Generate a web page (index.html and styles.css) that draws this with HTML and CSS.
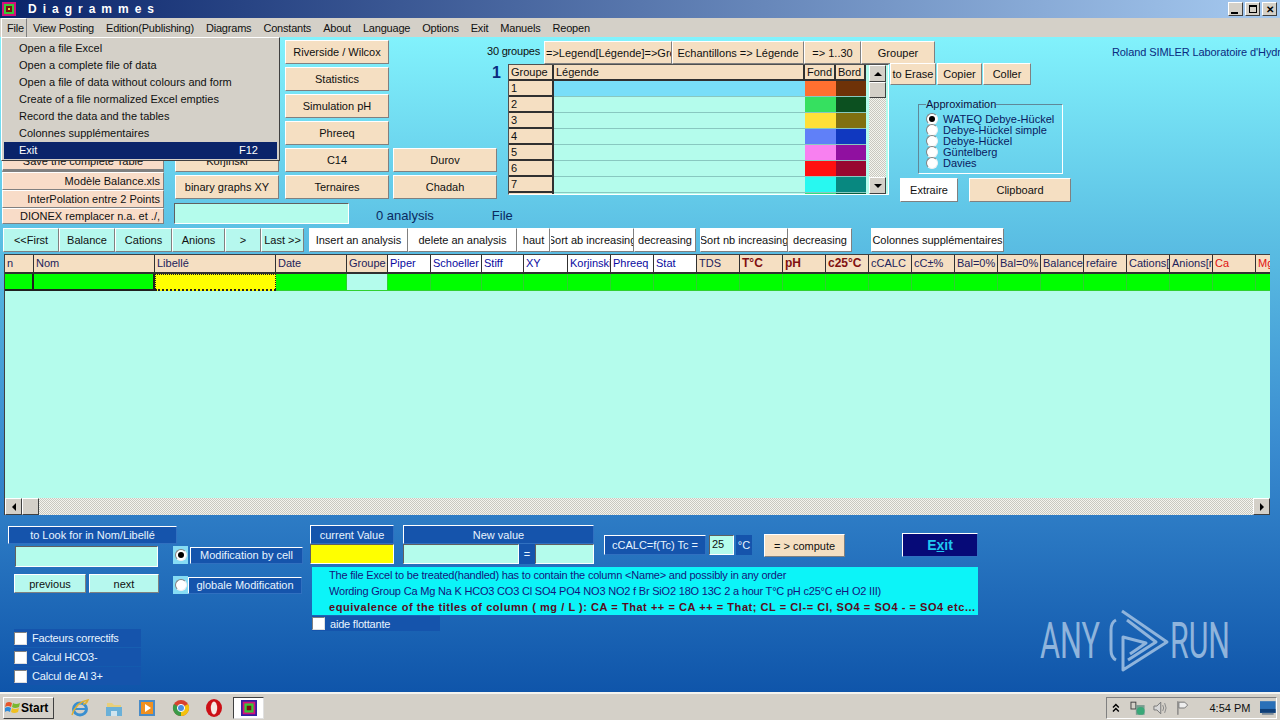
FILE: index.html
```html
<!DOCTYPE html>
<html lang="en">

<head>
    <meta charset="UTF-8">
    <meta name="viewport" content="width=device-width, initial-scale=1.0">
    <title>Diagrammes</title>
    <link rel="stylesheet" href="styles.css">
</head>

<body>
    <div class="titlebar">
        <svg class="app-icon" viewBox="0 0 14 14" width="14" height="14">
            <rect width="14" height="14" fill="#d4107c" />
            <rect x="2" y="2" width="10" height="10" fill="#38c838" />
            <rect x="4" y="4" width="6" height="6" fill="#7a1010" />
            <rect x="6" y="6" width="2" height="2" fill="#e0e040" />
        </svg>
        <span class="title-text">Diagrammes</span>
        <div class="win-buttons">
            <span class="win-btn"><i class="ico-min"></i></span>
            <span class="win-btn"><i class="ico-restore"></i></span>
            <span class="win-btn win-close">✕</span>
        </div>
    </div>

    <div class="menubar">
        <span class="menu-item menu-open">File</span>
        <span class="menu-item">View Posting</span>
        <span class="menu-item">Edition(Publishing)</span>
        <span class="menu-item">Diagrams</span>
        <span class="menu-item">Constants</span>
        <span class="menu-item">About</span>
        <span class="menu-item">Language</span>
        <span class="menu-item">Options</span>
        <span class="menu-item">Exit</span>
        <span class="menu-item">Manuels</span>
        <span class="menu-item">Reopen</span>
    </div>

    <div class="dropdown">
        <div class="drop-item">Open a file Excel</div>
        <div class="drop-item">Open a complete file of data</div>
        <div class="drop-item">Open a file of data without colours and form</div>
        <div class="drop-item">Create of a file normalized Excel empties</div>
        <div class="drop-item">Record the data and the tables</div>
        <div class="drop-item">Colonnes supplémentaires</div>
        <div class="drop-item drop-selected"><span>Exit</span><span>F12</span></div>
    </div>

    <div class="form">
        <div class="top">
            <div class="col-files">
                <div class="btn btn-pink btn-save">Save the complete Table</div>
                <div class="btn btn-pink btn-right h18">Modèle Balance.xls</div>
                <div class="btn btn-pink btn-right h18">InterPolation entre 2 Points</div>
                <div class="btn btn-pink btn-right h16">DIONEX remplacer n.a. et ./,</div>
            </div>

            <div class="col-graphs">
                <div class="btn btn-beige h23">Korjinski</div>
                <div class="btn btn-beige h24">binary graphs XY</div>
                <div class="field field-search"></div>
            </div>

            <div class="col-diagrams">
                <div class="btn btn-beige">Riverside / Wilcox</div>
                <div></div>
                <div class="btn btn-beige">Statistics</div>
                <div></div>
                <div class="btn btn-beige">Simulation pH</div>
                <div></div>
                <div class="btn btn-beige">Phreeq</div>
                <div></div>
                <div class="btn btn-beige">C14</div>
                <div class="btn btn-beige">Durov</div>
                <div class="btn btn-beige">Ternaires</div>
                <div class="btn btn-beige">Chadah</div>
                <div class="status-row">
                    <span class="status-analysis">0 analysis</span>
                    <span class="status-file">File</span>
                </div>
            </div>

            <div class="col-groups">
                <div class="groups-head">
                    <span class="groups-count">30 groupes</span>
                    <div class="btn btn-beige w128 nowrap-clip">=&gt;Legend[Légende]=&gt;Groupe</div>
                    <div class="btn btn-beige w132">Echantillons =&gt; Légende</div>
                    <div class="btn btn-beige w57">=&gt; 1..30</div>
                    <div class="btn btn-beige w74">Grouper</div>
                </div>
                <div class="groups-body">
                    <span class="group-number">1</span>
                    <div class="legend">
                        <div class="legend-row legend-head">
                            <span>Groupe</span><span>Légende</span><span>Fond</span><span>Bord</span>
                        </div>
                        <div class="legend-row">
                            <span class="fixed">1</span><span class="legend-cur"></span><span class="c-a1"></span><span class="c-a2"></span>
                        </div>
                        <div class="legend-row">
                            <span class="fixed">2</span><span></span><span class="c-b1"></span><span class="c-b2"></span>
                        </div>
                        <div class="legend-row">
                            <span class="fixed">3</span><span></span><span class="c-c1"></span><span class="c-c2"></span>
                        </div>
                        <div class="legend-row">
                            <span class="fixed">4</span><span></span><span class="c-d1"></span><span class="c-d2"></span>
                        </div>
                        <div class="legend-row">
                            <span class="fixed">5</span><span></span><span class="c-e1"></span><span class="c-e2"></span>
                        </div>
                        <div class="legend-row">
                            <span class="fixed">6</span><span></span><span class="c-f1"></span><span class="c-f2"></span>
                        </div>
                        <div class="legend-row">
                            <span class="fixed">7</span><span></span><span class="c-g1"></span><span class="c-g2"></span>
                        </div>
                        <div class="legend-row legend-cut">
                            <span class="fixed"></span><span></span><span class="c-h1"></span><span class="c-h2"></span>
                        </div>
                        <div class="legend-scroll">
                            <span class="sb-btn"><i class="arrow-up"></i></span>
                            <span class="sb-thumb"></span>
                            <span class="sb-track"></span>
                            <span class="sb-btn"><i class="arrow-down"></i></span>
                        </div>
                    </div>
                    <div class="groups-side">
                        <div class="side-buttons">
                            <div class="btn btn-beige w46">to Erase</div>
                            <div class="btn btn-beige w45">Copier</div>
                            <div class="btn btn-beige w48">Coller</div>
                        </div>
                        <fieldset class="approx">
                            <legend>Approximation</legend>
                            <div class="approx-row"><span class="radio radio-on"></span>WATEQ Debye-Hückel</div>
                            <div class="approx-row"><span class="radio"></span>Debye-Hückel simple</div>
                            <div class="approx-row"><span class="radio"></span>Debye-Hückel</div>
                            <div class="approx-row"><span class="radio"></span>Güntelberg</div>
                            <div class="approx-row"><span class="radio"></span>Davies</div>
                        </fieldset>
                        <div class="side-actions">
                            <div class="btn btn-white w58">Extraire</div>
                            <div class="btn btn-beige w102">Clipboard</div>
                        </div>
                    </div>
                </div>
            </div>

            <div class="author">Roland SIMLER Laboratoire d'Hydrogéologie</div>
        </div>

        <div class="toolbar">
            <div class="btn btn-mint w56">&lt;&lt;First</div>
            <div class="btn btn-mint w56">Balance</div>
            <div class="btn btn-mint w57">Cations</div>
            <div class="btn btn-mint w53">Anions</div>
            <div class="btn btn-mint w36">&gt;</div>
            <div class="btn btn-mint w43">Last &gt;&gt;</div>
            <div class="btn btn-white w99 ml5">Insert an analysis</div>
            <div class="btn btn-white w109">delete an analysis</div>
            <div class="btn btn-white w33">haut</div>
            <div class="btn btn-white w84">Sort ab increasing</div>
            <div class="btn btn-white w62">decreasing</div>
            <div class="btn btn-white w88 ml4">Sort nb increasing</div>
            <div class="btn btn-white w64">decreasing</div>
            <div class="btn btn-white w133 ml19">Colonnes supplémentaires</div>
        </div>

        <div class="sheet">
            <div class="sheet-rows">
                <div class="sheet-row sheet-head">
                    <span class="hd">n</span>
                    <span class="hd">Nom</span>
                    <span class="hd">Libellé</span>
                    <span class="hd">Date</span>
                    <span class="hd">Groupe</span>
                    <span class="hd-w">Piper</span>
                    <span class="hd-w">Schoeller</span>
                    <span class="hd-w">Stiff</span>
                    <span class="hd-w">XY</span>
                    <span class="hd-w">Korjinski</span>
                    <span class="hd-w">Phreeq</span>
                    <span class="hd-w">Stat</span>
                    <span class="hd">TDS</span>
                    <span class="hd hd-red">T°C</span>
                    <span class="hd hd-red">pH</span>
                    <span class="hd hd-red">c25°C</span>
                    <span class="hd">cCALC</span>
                    <span class="hd">cC±%</span>
                    <span class="hd">Bal=0%</span>
                    <span class="hd">Bal=0%</span>
                    <span class="hd">Balance</span>
                    <span class="hd">refaire</span>
                    <span class="hd">Cations[meq]</span>
                    <span class="hd">Anions[meq]</span>
                    <span class="hd hd-ion">Ca</span>
                    <span class="hd hd-ion">Mg</span>
                </div>
                <div class="sheet-row sheet-data">
                    <span class="cell-fix"></span>
                    <span class="cell-fix"></span>
                    <span class="cell-cur"></span>
                    <span></span>
                    <span class="cell-mint"></span>
                    <span></span><span></span><span></span><span></span><span></span><span></span><span></span>
                    <span></span><span></span><span></span><span></span><span></span><span></span><span></span>
                    <span></span><span></span><span></span><span></span><span></span><span></span><span></span>
                </div>
            </div>
            <div class="sheet-scroll">
                <span class="sb-btn"><i class="arrow-left"></i></span>
                <span class="sb-btn"></span>
                <span class="sb-track"></span>
                <span class="sb-btn"><i class="arrow-right"></i></span>
            </div>
        </div>

        <div class="bottom">
            <div class="col-search">
                <div class="label label-look">to Look for in Nom/Libellé</div>
                <div class="field field-look"></div>
                <div class="nav-buttons">
                    <div class="btn btn-mint w72">previous</div>
                    <div class="btn btn-mint w70">next</div>
                </div>
                <div class="options">
                    <div class="option"><span class="check"></span>Facteurs correctifs</div>
                    <div class="option"><span class="check"></span>Calcul HCO3-</div>
                    <div class="option"><span class="check"></span>Calcul de Al 3+</div>
                </div>
            </div>

            <div class="col-mode">
                <div class="mode-row">
                    <span class="radio-box"><span class="radio radio-on"></span></span>
                    <span class="label label-mode">Modification by cell</span>
                </div>
                <div class="mode-row mode-global">
                    <span class="radio-box"><span class="radio"></span></span>
                    <span class="label label-global">globale Modification</span>
                </div>
            </div>

            <div class="col-edit">
                <div class="edit-row">
                    <div class="value-box w84">
                        <div class="label label-value">current Value</div>
                        <div class="field field-yellow"></div>
                    </div>
                    <div class="value-box w191">
                        <div class="label label-value">New value</div>
                        <div class="value-fields">
                            <div class="field field-new"></div>
                            <div class="equals">=</div>
                            <div class="field field-new2"></div>
                        </div>
                    </div>
                    <div class="calc">
                        <span class="label label-calc">cCALC=f(Tc) Tc =</span>
                        <span class="field field-tc">25</span>
                        <span class="label label-deg">°C</span>
                    </div>
                    <div class="btn btn-beige btn-compute">= &gt; compute</div>
                    <div class="btn-exit">E<u>x</u>it</div>
                </div>
                <div class="info">
                    <div>The file Excel to be treated(handled) has to contain the column &lt;Name&gt; and possibly in any order</div>
                    <div>Wording Group Ca Mg Na K HCO3 CO3 Cl SO4 PO4 NO3 NO2 f Br SiO2 18O 13C 2 a hour T°C pH c25°C eH O2 III)</div>
                    <div class="info-bold">equivalence of the titles of column ( mg / L ): CA = That ++ = CA ++ = That; CL = Cl-= Cl, SO4 = SO4 - = SO4 etc...</div>
                </div>
                <div class="option option-help"><span class="check"></span>aide flottante</div>
            </div>
        </div>

        <svg class="watermark" viewBox="0 0 200 70" width="200" height="70">
            <text x="2" y="53" textLength="60" lengthAdjust="spacingAndGlyphs">ANY</text>
            <g fill="none" stroke-width="3" stroke-linejoin="round">
                <path d="M78 15 C74 17 73 20 73 25 V45 C73 50 74 53 78 55" />
                <path d="M84 6 L129 37 L85 65 V32 L108 38 L92 49" />
                <path d="M89 15 L118 37 L90 55" />
            </g>
            <text x="132" y="53" textLength="60" lengthAdjust="spacingAndGlyphs">RUN</text>
        </svg>
    </div>

    <div class="taskbar">
        <div class="start">
            <svg viewBox="0 0 16 16" width="16" height="16">
                <path d="M1 3 Q4 1 7 3 L6 7 Q3 5 0 7 Z" fill="#e8562a" />
                <path d="M8 3 Q11 5 15 3 L14 7 Q10 9 7 7 Z" fill="#7ab82e" />
                <path d="M0 8 Q3 6 6 8 L5 12 Q2 10 0 12 Z" fill="#2d8ad8" />
                <path d="M7 8 Q10 10 14 8 L13 12 Q9 14 6 12 Z" fill="#f0c020" />
            </svg>
            <span>Start</span>
        </div>
        <div class="task-icons">
            <svg viewBox="0 0 20 20" width="20" height="20">
                <ellipse cx="10" cy="11" rx="6.5" ry="6" fill="none" stroke="#3a8fd0" stroke-width="3" />
                <path d="M4 11 H16" stroke="#3a8fd0" stroke-width="2" />
                <path d="M2 17 C5 7 12 3 18 2 C17 5 15 6 13 6" fill="none" stroke="#e0b030" stroke-width="1.5" />
            </svg>
            <svg viewBox="0 0 20 20" width="20" height="20">
                <path d="M3 5 H8 L10 7 H17 V10 H3 Z" fill="#e8cf7a" />
                <path d="M2 9 H18 V18 H13 V13 H7 V18 H2 Z" fill="#6ab0d8" />
                <rect x="7" y="13" width="6" height="5" fill="#d0e4ee" />
            </svg>
            <svg viewBox="0 0 20 20" width="20" height="20">
                <rect x="2" y="2" width="16" height="16" fill="#4a8cc8" />
                <rect x="4" y="4" width="12" height="12" fill="#f09020" />
                <path d="M8 6 L14 10 L8 14 Z" fill="#fff" />
            </svg>
            <svg viewBox="0 0 20 20" width="20" height="20">
                <circle cx="10" cy="10" r="8" fill="#d8412f" />
                <path d="M10 10 L17 6 A8 8 0 0 1 10 18 Z" fill="#f4c20d" />
                <path d="M10 10 L10 18 A8 8 0 0 1 3 6 Z" fill="#3a9a48" />
                <circle cx="10" cy="10" r="3.6" fill="#4a8ee0" stroke="#fff" />
            </svg>
            <svg viewBox="0 0 20 20" width="20" height="20">
                <ellipse cx="10" cy="10" rx="8" ry="9" fill="#cc0f16" />
                <ellipse cx="10" cy="10" rx="3.2" ry="6.5" fill="#f6e8e4" />
            </svg>
        </div>
        <div class="task-active">
            <svg viewBox="0 0 14 14" width="16" height="16">
                <rect width="14" height="14" fill="#3020a0" />
                <rect x="1.5" y="1.5" width="11" height="11" fill="#d4107c" />
                <rect x="3" y="3" width="8" height="8" fill="#38c838" />
                <rect x="5" y="5" width="4" height="4" fill="#7a1010" />
            </svg>
        </div>
        <div class="tray">
            <svg class="tray-chevron" viewBox="0 0 8 10" width="8" height="10">
                <path d="M1 4.5 L4 1.5 L7 4.5 M1 8.5 L4 5.5 L7 8.5" fill="none" stroke="#000" stroke-width="1.5" />
            </svg>
            <svg viewBox="0 0 16 16" width="16" height="16">
                <rect x="1" y="2" width="5" height="7" fill="none" stroke="#444" />
                <rect x="6" y="5" width="9" height="10" fill="#7a9c90" />
                <circle cx="11" cy="11" r="4" fill="#3aa878" />
            </svg>
            <svg viewBox="0 0 16 16" width="16" height="16">
                <path d="M2 6 H5 L9 2 V14 L5 10 H2 Z" fill="#d8d8d8" stroke="#777" />
                <path d="M11 5 Q13 8 11 11 M13 3 Q16 8 13 13" fill="none" stroke="#888" />
            </svg>
            <svg viewBox="0 0 16 16" width="16" height="16">
                <path d="M3 1 V15" stroke="#666" />
                <path d="M4 2 H10 L13 5 L10 8 H4 Z" fill="#eee" stroke="#777" />
            </svg>
            <span class="clock">4:54 PM</span>
            <svg class="show-desktop" viewBox="0 0 16 14" width="16" height="14">
                <rect width="16" height="12" fill="#2a70b8" />
                <rect y="8" width="16" height="4" fill="#0f3f78" />
                <rect x="2" y="12" width="12" height="2" fill="#7a8a98" />
            </svg>
        </div>
    </div>
</body>

</html>
```

FILE: styles.css
```css
* {
    box-sizing: border-box;
}

html,
body {
    margin: 0;
    padding: 0;
    height: 100%;
    overflow: hidden;
}

body {
    position: relative;
    display: flex;
    flex-direction: column;
    width: 1280px;
    height: 720px;
    font-family: "Liberation Sans", Arial, sans-serif;
    font-size: 11px;
    color: #101010;
    background-color: #d4d0c8;
}

/* title and menu */
.titlebar {
    display: flex;
    align-items: center;
    height: 18px;
    padding: 0 3px 0 2px;
    background: linear-gradient(to right, #0a246a, #a6caf0);
}

.title-text {
    margin-left: 12px;
    color: #fff;
    font-weight: bold;
    font-size: 12px;
    letter-spacing: 6px;
}

.win-buttons {
    display: flex;
    gap: 2px;
    margin-left: auto;
}

.win-btn {
    display: flex;
    align-items: center;
    justify-content: center;
    width: 15px;
    height: 14px;
    font-size: 10px;
    font-weight: bold;
    color: #000;
    background-color: #d4d0c8;
    border: 1px solid;
    border-color: #fff #404040 #404040 #fff;
}

.ico-min {
    width: 7px;
    height: 2px;
    margin-top: 7px;
    margin-right: 2px;
    background-color: #000;
}

.ico-restore {
    width: 8px;
    height: 8px;
    border: 1px solid #000;
    border-top-width: 2px;
}

.menubar {
    display: flex;
    align-items: center;
    height: 19px;
    padding-left: 1px;
    letter-spacing: -0.2px;
    background-color: #d4d0c8;
}

.menu-item {
    padding: 0 6px;
    line-height: 18px;
}

.menu-open {
    width: 26px;
    padding: 0 5px;
    border: 1px solid;
    border-color: #fff #808080 #808080 #fff;
}

.dropdown {
    position: absolute;
    z-index: 5;
    top: 37px;
    left: 1px;
    width: 279px;
    height: 124px;
    padding: 2px;
    background-color: #d4d0c8;
    border: 1px solid;
    border-color: #fff #404040 #404040 #fff;
}

.drop-item {
    height: 17px;
    padding-left: 15px;
    line-height: 17px;
}

.drop-selected {
    display: flex;
    justify-content: space-between;
    padding-right: 19px;
    color: #fff;
    background-color: #0a246a;
}

/* main form */
.form {
    position: relative;
    display: flex;
    flex-direction: column;
    height: 655px;
    overflow: hidden;
    background: linear-gradient(to bottom, #82f2fc 0%, #5cc0e4 30%, #3a8cd0 62%, #0f55aa 100%);
}

.top {
    display: flex;
    height: 191px;
    padding: 3px 0 0 2px;
    color: #0a2a60;
}

.btn {
    display: flex;
    align-items: center;
    justify-content: center;
    height: 100%;
    white-space: nowrap;
    overflow: hidden;
    color: #101010;
    border: 1px solid;
    border-color: #fff #808080 #808080 #fff;
}

.btn-beige {
    background-color: #f5dfc2;
}

.btn-pink {
    background-color: #f8dcc8;
}

.btn-mint {
    background-color: #b6f8ee;
}

.btn-white {
    background-color: #fff;
}

.btn-right {
    justify-content: flex-end;
    padding-right: 3px;
}

.nowrap-clip {
    justify-content: flex-start;
    padding-left: 1px;
}

.h16 {
    height: 16px;
}

.h18 {
    height: 18px;
}

.h23 {
    height: 23px;
}

.h24 {
    height: 24px;
}

.w33 { width: 33px; }
.w36 { width: 36px; }
.w43 { width: 43px; }
.w45 { width: 45px; }
.w46 { width: 46px; }
.w48 { width: 48px; }
.w53 { width: 53px; }
.w56 { width: 56px; }
.w57 { width: 57px; }
.w58 { width: 58px; }
.w62 { width: 62px; }
.w64 { width: 64px; }
.w70 { width: 70px; }
.w72 { width: 72px; }
.w74 { width: 74px; }
.w84 { width: 84px; }
.w88 { width: 88px; }
.w99 { width: 99px; }
.w102 { width: 102px; }
.w109 { width: 109px; }
.w128 { width: 128px; }
.w132 { width: 132px; }
.w133 { width: 133px; }
.w191 { width: 191px; }

.ml4 { margin-left: 4px; }
.ml5 { margin-left: 5px; }
.ml19 { margin-left: 19px; }

.col-files {
    display: flex;
    flex-direction: column;
    justify-content: flex-end;
    flex: none;
    width: 162px;
    height: 184px;
}

.btn-save {
    height: 20px;
    border-bottom: 3px solid #808080;
}

.col-graphs {
    display: flex;
    flex-direction: column;
    justify-content: flex-end;
    gap: 3px;
    flex: none;
    width: 104px;
    height: 184px;
    margin-left: 11px;
}

.field {
    display: block;
    background-color: #b4fcec;
    border: 1px solid;
    border-color: #606060 #fff #fff #606060;
}

.field-search {
    flex: none;
    width: 175px;
    height: 21px;
    margin-left: -1px;
    margin-top: 1px;
}

.col-diagrams {
    display: grid;
    grid-template-columns: 104px 104px;
    grid-template-rows: repeat(6, 24px) 1fr;
    gap: 3px 4px;
    flex: none;
    width: 212px;
    height: 184px;
    margin-left: 6px;
}

.status-row {
    grid-column: 1 / 3;
    display: flex;
    align-items: flex-end;
    height: 21px;
    font-size: 13px;
    white-space: nowrap;
    color: #0a2a60;
}

.status-analysis {
    margin-left: 91px;
}

.status-file {
    margin-left: 58px;
}

.col-groups {
    flex: none;
    margin-left: -10px;
}

.groups-head {
    display: flex;
    align-items: stretch;
    height: 23px;
    margin-top: 1px;
}

.groups-count {
    width: 57px;
    padding-top: 4px;
    white-space: nowrap;
    letter-spacing: -0.2px;
    color: #101010;
}

.groups-body {
    display: flex;
}

.group-number {
    width: 21px;
    padding: 0 0 0 5px;
    color: #0a2a80;
    font-size: 16px;
    font-weight: bold;
}

.legend {
    position: relative;
    flex: none;
    width: 381px;
    height: 131px;
    overflow: hidden;
    color: #101010;
    background-color: #b4fcec;
    border: 1px solid #808080;
    border-color: #505050 #fff #fff #505050;
}

.legend-row {
    display: grid;
    grid-template-columns: 45px 251px 31px 30px;
    grid-template-rows: 16px;
    height: 16px;
    overflow: hidden;
    line-height: 14px;
}

.legend-row span {
    padding-left: 2px;
    border-bottom: 1px solid #88c8c0;
}

.legend-head span,
.legend-row .fixed {
    background-color: #f5dfc2;
    border-right: 2px solid #303030;
    border-bottom: 2px solid #303030;
}

.legend-row .legend-cur {
    background-color: #78def8;
}

.legend-cut {
    height: 4px;
}

.c-a1 { background-color: #ff7030; }
.c-a2 { background-color: #6e3208; }
.c-b1 { background-color: #36e060; }
.c-b2 { background-color: #0c5020; }
.c-c1 { background-color: #ffe038; }
.c-c2 { background-color: #807010; }
.c-d1 { background-color: #6080f8; }
.c-d2 { background-color: #1038c0; }
.c-e1 { background-color: #f880f0; }
.c-e2 { background-color: #9010a0; }
.c-f1 { background-color: #ff1010; }
.c-f2 { background-color: #980830; }
.c-g1 { background-color: #28f8f0; }
.c-g2 { background-color: #088880; }
.c-h1 { background-color: #30e080; }
.c-h2 { background-color: #086040; }

.legend-scroll {
    position: absolute;
    top: 0;
    right: 2px;
    bottom: 0;
    display: flex;
    flex-direction: column;
    width: 17px;
}

.sb-btn {
    display: flex;
    flex: none;
    align-items: center;
    justify-content: center;
    width: 17px;
    height: 17px;
    background-color: #d4d0c8;
    border: 1px solid;
    border-color: #fff #404040 #404040 #fff;
}

.sb-thumb {
    flex: none;
    height: 16px;
    background-color: #d4d0c8;
    border: 1px solid;
    border-color: #fff #404040 #404040 #fff;
}

.sb-track {
    flex: 1;
    background-color: #e0e0d8;
    background-image: repeating-conic-gradient(#c8c8c0 0 25%, #f4f4ee 0 50%);
    background-size: 2px 2px;
}

.arrow-up,
.arrow-down,
.arrow-left,
.arrow-right {
    width: 0;
    height: 0;
    border: 4px solid transparent;
}

.arrow-up {
    margin-top: -4px;
    border-bottom-color: #000;
}

.arrow-down {
    margin-top: 4px;
    border-top-color: #000;
}

.arrow-left {
    margin-left: -4px;
    border-right-color: #000;
}

.arrow-right {
    margin-left: 4px;
    border-left-color: #000;
}

.groups-side {
    display: flex;
    flex-direction: column;
    flex: none;
    margin-left: 1px;
}

.side-buttons {
    display: flex;
    gap: 1px;
    height: 22px;
    margin-top: -1px;
}

.approx {
    width: 145px;
    height: 76px;
    margin: 13px 0 0 28px;
    padding: 3px 0 0 7px;
    color: #0a1a60;
    border: 1px solid;
    border-color: #608898 #fff #fff #608898;
}

.approx legend {
    padding: 0;
    color: #101040;
    font-size: 11px;
}

.approx-row {
    display: flex;
    align-items: center;
    gap: 5px;
    height: 11px;
    white-space: nowrap;
}

.radio {
    display: inline-block;
    position: relative;
    flex: none;
    width: 12px;
    height: 12px;
    background-color: #fff;
    border: 1px solid #808080;
    border-right-color: #f0f0f0;
    border-bottom-color: #f0f0f0;
    border-radius: 50%;
}

.radio-on::after {
    content: "";
    position: absolute;
    top: 2px;
    left: 2px;
    width: 6px;
    height: 6px;
    background-color: #000;
    border-radius: 50%;
}

.side-actions {
    display: flex;
    gap: 11px;
    height: 24px;
    margin: 4px 0 0 10px;
}

.author {
    flex: none;
    margin: 6px 0 0 41px;
    white-space: nowrap;
    letter-spacing: -0.1px;
    color: #0a2a80;
}

/* navigation buttons above the sheet */
.toolbar {
    display: flex;
    flex: none;
    height: 24px;
    padding-left: 3px;
}

/* data sheet */
.sheet {
    display: flex;
    flex-direction: column;
    flex: none;
    width: 1266px;
    height: 261px;
    margin: 2px 0 0 4px;
    overflow: hidden;
    background-color: #b4fcec;
    border-top: 1px solid #404040;
    border-left: 1px solid #404040;
}

.sheet-rows {
    flex: 1;
}

.sheet-row {
    display: grid;
    grid-template-columns: 29px 121px 121px 71px 41px 43px 51px 42px 44px 43px 43px 43px 43px 43px 43px 43px 43px 43px 43px 43px 43px 43px 43px 43px 43px 15px;
}

.sheet-head {
    grid-template-rows: 19px;
    height: 19px;
    line-height: 17px;
}

.sheet-head span {
    padding-left: 2px;
    overflow: hidden;
    white-space: nowrap;
    border-right: 1px solid #303030;
    border-bottom: 2px solid #303030;
}

.hd {
    color: #22225a;
    background-color: #f5dfc2;
}

.hd-w {
    color: #0a0aa0;
    background-color: #fff;
}

.sheet-head .hd-red {
    color: #801010;
    font-size: 12px;
    font-weight: bold;
}

.hd-ion {
    color: #e01010;
}

.sheet-data {
    grid-template-rows: 17px;
    height: 17px;
    background-color: #00ff00;
}

.sheet-data span {
    border-right: 1px solid #30d030;
    border-bottom: 1px solid #30d030;
}

.sheet-data .cell-fix {
    border-right: 2px solid #202020;
    border-bottom: 2px solid #202020;
}

.sheet-data .cell-cur {
    background-color: #ffff00;
    border: 1px dotted #202020;
    border-bottom-width: 2px;
}

.sheet-data .cell-mint {
    background-color: #b4fcec;
}

.sheet-scroll {
    display: flex;
    flex: none;
    height: 17px;
}

/* bottom panel */
.bottom {
    display: flex;
    flex: 1;
    color: #fff;
}

.label {
    display: flex;
    align-items: center;
    justify-content: center;
    white-space: nowrap;
    color: #e8f4ff;
    background-color: #1554ac;
    border: 1px solid;
    border-color: #fff #3070c0 #3070c0 #fff;
}

.col-search {
    flex: none;
    width: 173px;
    padding: 11px 0 0 8px;
}

.label-look {
    width: 169px;
    height: 18px;
}

.field-look {
    width: 143px;
    height: 21px;
    margin: 2px 0 0 7px;
}

.nav-buttons {
    display: flex;
    gap: 3px;
    height: 19px;
    margin: 7px 0 0 6px;
}

.options {
    display: flex;
    flex-direction: column;
    gap: 1px;
    margin: 36px 0 0 6px;
}

.option {
    display: flex;
    align-items: center;
    gap: 5px;
    width: 127px;
    height: 18px;
    letter-spacing: -0.2px;
    color: #e8f4ff;
    background-color: #1554ac;
}

.check {
    flex: none;
    width: 13px;
    height: 13px;
    background-color: #fff;
    border: 1px solid;
    border-color: #808080 #e0e0e0 #e0e0e0 #808080;
}

.col-mode {
    flex: none;
    width: 137px;
    padding-top: 31px;
}

.mode-row {
    display: flex;
    align-items: center;
    height: 18px;
}

.mode-global {
    margin-top: 12px;
}

.radio-box {
    display: flex;
    flex: none;
    align-items: center;
    justify-content: center;
    width: 15px;
    height: 18px;
    background-color: #86dcf4;
}

.label-mode {
    width: 113px;
    height: 17px;
    margin-left: 2px;
}

.label-global {
    width: 114px;
    height: 17px;
}

.col-edit {
    flex: none;
    width: 670px;
    padding-top: 10px;
}

.edit-row {
    display: flex;
    height: 42px;
}

.value-box {
    flex: none;
    margin-right: 9px;
}

.label-value {
    height: 19px;
}

.field-yellow {
    height: 20px;
    background-color: #ffff00;
}

.value-fields {
    display: flex;
    height: 20px;
}

.field-new {
    width: 116px;
}

.equals {
    display: flex;
    align-items: center;
    justify-content: center;
    width: 16px;
    color: #e8f4ff;
    background-color: #1554ac;
}

.field-new2 {
    width: 59px;
}

.calc {
    display: flex;
    align-items: center;
    height: 22px;
    margin-top: 9px;
    margin-left: 1px;
}

.label-calc {
    width: 102px;
    height: 20px;
}

.field-tc {
    width: 25px;
    height: 20px;
    margin-left: 3px;
    padding-left: 2px;
    color: #101010;
    line-height: 16px;
}

.label-deg {
    width: 16px;
    height: 20px;
    margin-left: 2px;
    border: none;
}

.btn-compute {
    width: 81px;
    height: 23px;
    margin: 9px 0 0 12px;
}

.btn-exit {
    display: flex;
    align-items: center;
    justify-content: center;
    width: 76px;
    height: 24px;
    margin: 8px 0 0 57px;
    color: #20c8f0;
    font-size: 14px;
    font-weight: bold;
    background-color: #060a78;
    border: 1px solid;
    border-color: #fff #3070c0 #3070c0 #fff;
}

.info {
    width: 666px;
    height: 48px;
    margin-left: 2px;
    padding-left: 17px;
    letter-spacing: -0.2px;
    color: #14147c;
    line-height: 16px;
    background-color: #0cf4f8;
}

.info-bold {
    letter-spacing: 0.55px;
    color: #5a0a20;
    font-weight: bold;
    white-space: nowrap;
}

.option-help {
    width: 128px;
    height: 15px;
    margin: 1px 0 0 2px;
}

/* watermark */
.watermark {
    position: absolute;
    right: 42px;
    bottom: 17px;
}

.watermark text {
    font-family: Roboto, "Liberation Sans", sans-serif;
    font-size: 50px;
    fill: #8fb4dc;
}

.watermark path {
    stroke: #8fb4dc;
}

/* taskbar */
.taskbar {
    display: flex;
    align-items: center;
    height: 28px;
    padding: 2px 3px 0;
    background-color: #d4d0c8;
    border-top: 2px solid #f4f4f0;
}

.start {
    display: flex;
    align-items: center;
    gap: 0;
    width: 51px;
    height: 22px;
    padding-left: 1px;
    color: #000;
    font-size: 12px;
    font-weight: bold;
    border: 1px solid;
    border-color: #fff #404040 #404040 #fff;
}

.task-icons {
    display: flex;
    gap: 13.5px;
    margin-left: 16px;
}

.task-active {
    display: flex;
    align-items: center;
    justify-content: center;
    width: 31px;
    height: 22px;
    margin-left: 9px;
    background-color: #fff;
    border: 1px solid;
    border-color: #404040 #e0e0e0 #e0e0e0 #404040;
}

.tray {
    display: flex;
    align-items: center;
    width: 171px;
    height: 22px;
    margin-left: auto;
    padding-left: 5px;
    gap: 7px;
    border: 1px solid;
    border-color: #808080 #fff #fff #808080;
}

.tray-chevron {
    margin-right: 3px;
}

.clock {
    margin-left: 12px;
    white-space: nowrap;
    color: #101010;
}

.show-desktop {
    margin-left: 3px;
}
```
